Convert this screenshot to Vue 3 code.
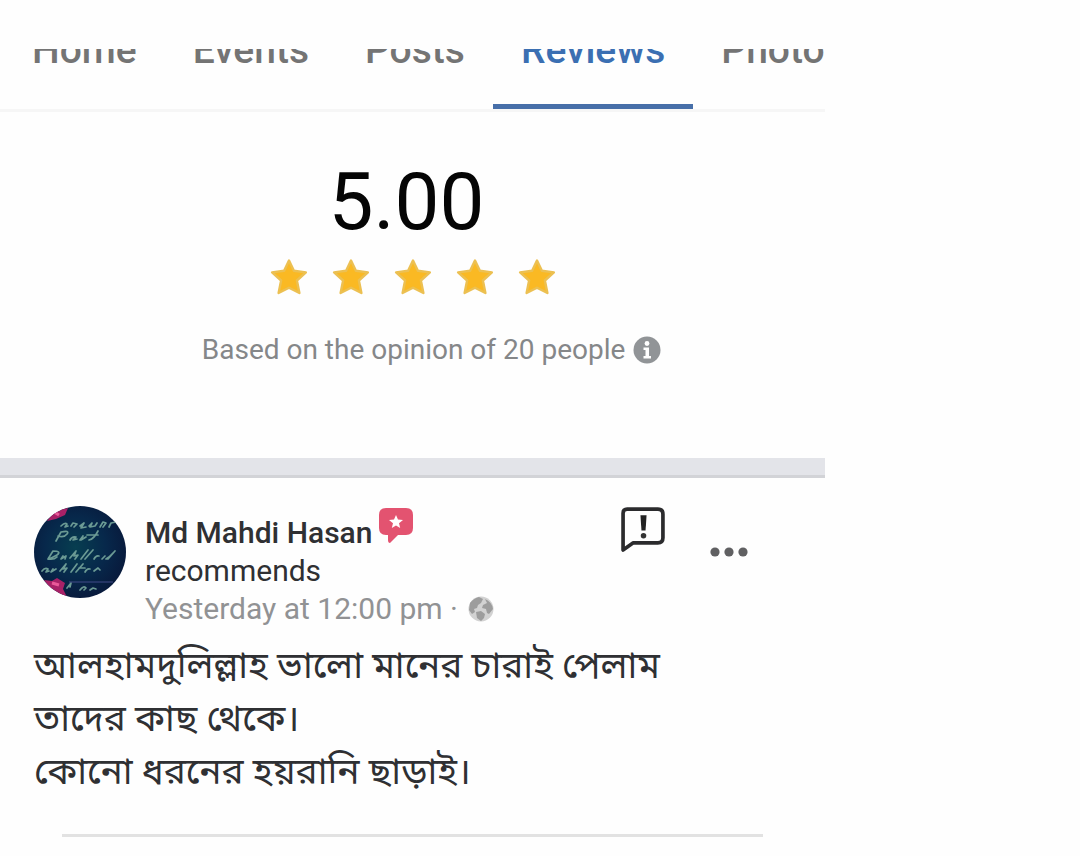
<script setup>
const tabs = ['Home', 'Events', 'Posts', 'Reviews', 'Photos']
const active = 'Reviews'
const lines = ['আলহামদুলিল্লাহ ভালো মানের চারাই পেলাম', 'তাদের কাছ থেকে।', 'কোনো ধরনের হয়রানি ছাড়াই।']
</script>

<template>
  <main class="page">
    <nav class="tabs" aria-label="Page sections">
      <a v-for="tab in tabs" :key="tab" href="#" class="tab" :class="{ active: tab === active }">{{ tab }}</a>
    </nav>

    <section class="summary">
      <div class="score">5.00</div>
      <div class="stars" role="img" aria-label="5 stars">
        <svg v-for="n in 5" :key="n" viewBox="0 0 38 38">
          <path d="M19 2.500l4.900 10.300 12 1.600-9 8.100 2.500 12.500L19 29.800 8.600 35l2.500-12.500-9-8.100 12-1.600z" fill="#fab923" stroke="#ecc052" stroke-width="2.400" stroke-linejoin="round" />
        </svg>
      </div>
      <p class="based">
        <span>Based on the opinion of 20 people</span>
        <button class="plain" aria-label="About this rating">
          <svg class="info" viewBox="0 0 28 28">
            <circle cx="14" cy="14" r="13.500" fill="#919497" />
            <circle cx="14" cy="7.500" r="2.400" fill="#fff" />
            <path d="M10.500 11.500h5.500v8.500h2v2.500h-7.500V20h2v-6h-2z" fill="#fff" />
          </svg>
        </button>
      </p>
    </section>

    <div class="divider"></div>

    <article class="review">
      <header class="head">
        <svg class="avatar" viewBox="0 0 92 92" role="img" aria-label="Md Mahdi Hasan">
          <defs>
            <clipPath id="disc"><circle cx="46" cy="46" r="46" /></clipPath>
            <radialGradient id="night" cx="0.450" cy="0.450" r="0.600">
              <stop offset="0" stop-color="#073e50" />
              <stop offset="0.550" stop-color="#07284b" />
              <stop offset="1" stop-color="#08183a" />
            </radialGradient>
          </defs>
          <g clip-path="url(#disc)">
            <rect width="92" height="92" fill="url(#night)" />
            <path d="M13 15l9-11 12-2-3 7-9 4zM10 74l8 1 5-3 8 5-2 6 4 8-11-2z" fill="#a82167" />
            <path d="M20 6l5 3M18 77l7 2" stroke="#e95999" stroke-width="3" />
            <g fill="none" stroke="#6b9a94" stroke-width="1.700" stroke-linecap="round" stroke-linejoin="round">
              <path d="M27 20q4-4 6-2l-2 3 3-1M37 20l2-3 4 1-3 3M46 20l4-3-3 5 5-1M55 20l3-3-2 4 5-1 2-3M66 21l3-5 3 1-3 4M75 21l2-4 5-1" />
              <path d="M22 35l5-9q9-2 6 2t-9 2M36 34q2-4 6-3l-3 3 4-1M46 34l3-4-2 4 5-3M55 34q5-1 9-9M53 29h11" />
              <path d="M14 53l5-8q9 0 4 4-5 3-9 4 6 1 9-2M29 50l-2 3 5-3-1 3M36 52l6-7-2 5 4-1-3 4M47 53l7-9M51 53l8-9M60 53q2-4 5-3M68 53l3-3M74 53l7-8-6 6-3 2" />
              <path d="M8 65q3-4 6-2l-2 3 3-1M19 63l-2 3 5-3M26 65l6-7-3 5 4-1-3 4M37 66l6-8M42 66l7-8M45 62h6M51 66q2-4 5-3M60 65l4-3 2 2" />
              <path d="M33 82l4-5-1 4M46 84q4-5 6-2l-2 2M56 84l3-2 3 1" />
            </g>
            <path d="M35 76h44" stroke="#414b87" stroke-width="1" />
          </g>
        </svg>

        <div class="who">
          <div class="name-row">
            <strong>Md Mahdi Hasan</strong>
            <svg class="badge" viewBox="0 0 36 36" aria-hidden="true">
              <path d="M8 1h20q7 0 7 7v13q0 7-7 7h-8l-8 8q-2 0-2-3v-5H8q-7 0-7-7V8q0-7 7-7z" fill="#e35370" />
              <path d="M18 8l2 4.500 5 .5-4 3.200 1.200 4.800-4.200-2.500-4.200 2.500 1.200-4.800-4-3.200 5-.5z" fill="#fff" />
            </svg>
          </div>
          <div class="verb">recommends</div>
          <div class="when">
            <span>Yesterday at 12:00 pm ·</span>
            <svg class="globe" viewBox="0 0 26 26" aria-label="Public" role="img">
              <circle cx="13" cy="13" r="12.500" fill="#d2d2d2" />
              <path d="M2 7q4-5 9-6l4 2-2 4-3 2-1 3-3 1 1 3-3 2-3-4zM17 3q7 3 8 10l-4 5-2-1-1-4-4-1 1-3 4-2zM8 16l5-1 4 3-1 4-3 3-4-3z" fill="#9d9d9d" />
            </svg>
          </div>
        </div>

        <button class="plain report" aria-label="Give feedback">
          <svg viewBox="1 1 45 45">
            <path d="M8 4h30q5 0 5 5v23q0 5-5 5H14l-10 7V8q0-4 4-4z" fill="none" stroke="#2b2b2d" stroke-width="3.600" stroke-linejoin="round" />
            <path d="M21 10h6l-1 15h-4z" fill="#222" />
            <circle cx="24" cy="30" r="2.700" fill="#333" />
          </svg>
        </button>
        <button class="plain more" aria-label="More options">
          <svg viewBox="0 0 38 12">
            <circle v-for="x in [5, 19, 33]" :key="x" :cx="x" cy="6" r="4.600" fill="#606062" />
          </svg>
        </button>
      </header>

      <p class="text">
        <span v-for="line in lines" :key="line">{{ line }}</span>
      </p>
      <hr class="rule" />
    </article>
  </main>
</template>

<style>
body {
  background: #fefefe;
}
</style>

<style scoped>
.page {
  box-sizing: border-box;
  width: 76.4%;
  padding-top: 49px;
  font-family: Roboto, "Noto Sans", sans-serif;
  color: #2f3033;
}
.tabs {
  display: flex;
  align-items: flex-end;
  height: 60px;
  padding-left: 4px;
  overflow: hidden;
  border-bottom: 3px solid #f6f6f6;
}
.tab {
  flex: none;
  padding: 0 28px 32px;
  border-bottom: 5px solid transparent;
  font-size: 39px;
  line-height: 44px;
  font-weight: 500;
  color: #747474;
  text-decoration: none;
}
.tab.active {
  color: #3b6fb2;
  border-color: #476fa9;
}
.summary {
  display: flex;
  flex-direction: column;
  align-items: center;
  padding: 50px 0 90px;
}
.score {
  padding-right: 12px;
  font-size: 80px;
  line-height: 80px;
  color: #050505;
}
.stars {
  display: flex;
  gap: 24px;
  margin-top: 16px;
}
.stars svg {
  width: 38px;
  height: 38px;
}
.based {
  display: flex;
  align-items: center;
  gap: 8px;
  margin: 36px 0 0;
  padding-left: 38px;
  font-size: 28px;
  line-height: 36px;
  color: #858789;
  white-space: nowrap;
}
.plain {
  flex: none;
  padding: 0;
  border: 0;
  background: none;
  cursor: pointer;
}
.plain svg {
  display: block;
}
.info {
  width: 28px;
  height: 28px;
}
.divider {
  height: 17px;
  background: #e3e4e9;
  border-bottom: 3px solid #d2d3d7;
}
.review {
  padding: 28px 34px 18px;
}
.head {
  display: flex;
  align-items: flex-start;
}
.avatar {
  flex: none;
  width: 92px;
  height: 92px;
}
.who {
  flex: 1;
  margin-left: 19px;
  font-size: 30px;
  line-height: 38px;
  white-space: nowrap;
}
.name-row {
  display: flex;
  gap: 6px;
  padding-top: 8px;
}
.name-row strong {
  font-weight: 500;
}
.badge {
  width: 36px;
  height: 36px;
  margin-top: -7px;
}
.when {
  display: flex;
  align-items: center;
  gap: 10px;
  color: #919294;
}
.globe {
  width: 26px;
  height: 26px;
}
.report svg {
  width: 46px;
  height: 46px;
}
.more {
  margin: 40px 43px 0 44px;
}
.more svg {
  width: 38px;
  height: 12px;
}
.text {
  margin: 11px 0 36px;
  font-family: Roboto, "Noto Sans Bengali", "Noto Sans", sans-serif;
  font-size: 37px;
  line-height: 53px;
}
.text span {
  display: block;
}
.rule {
  height: 3px;
  margin: 0 28px;
  border: 0;
  background: #e2e2e2;
}
</style>
